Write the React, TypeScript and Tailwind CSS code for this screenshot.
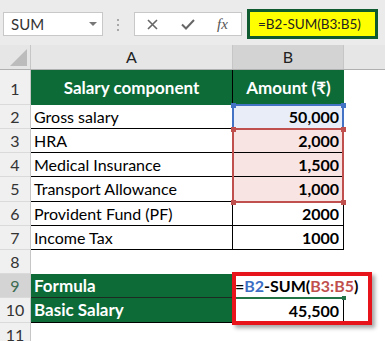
const GREEN = "bg-[#0c6b37]";

const RowNum = ({ n, h, sel, bottom }: { n: string; h: string; sel?: boolean; bottom?: boolean }) => (
  <div
    className={`w-[31px] shrink-0 border-r border-r-[#c6c6c6] border-b border-b-[#dadada] flex justify-center text-[16px] ${h} ${
      sel ? "bg-[#d4d4d4] text-[#3d6b50]" : "bg-[#f0f0f0] text-[#333]"
    } ${bottom ? "items-end pb-[3px]" : "items-center"}`}
  >
    {n}
  </div>
);

const App = () => {
  return (
    <div className="w-[385px] h-[341px] overflow-hidden bg-white font-['Lato',sans-serif] relative">
      {/* formula bar */}
      <div className="h-[45px] bg-[#ebebeb] flex items-start">
        <div className="ml-[3px] mt-[12px] w-[100px] h-[24px] bg-white border border-[#c8c8c8] flex items-center justify-between pl-[7px] pr-[5px] text-[15px] text-[#333]">
          <span>SUM</span>
          <svg width="8" height="5" viewBox="0 0 8 5">
            <polygon points="0,0 8,0 4,4" fill="#777" />
          </svg>
        </div>
        <div className="ml-[14px] mt-[19px] flex flex-col gap-[3px]">
          <div className="w-[2px] h-[2px] bg-[#a8a8a8]" />
          <div className="w-[2px] h-[2px] bg-[#a8a8a8]" />
          <div className="w-[2px] h-[2px] bg-[#a8a8a8]" />
        </div>
        <div className="ml-[15px] mt-[12px] w-[108px] h-[24px] bg-white border border-[#c8c8c8] flex items-center">
          <svg width="11" height="11" viewBox="0 0 11 11" className="ml-[12px]">
            <path d="M1 1 L10 10 M10 1 L1 10" stroke="#666" strokeWidth="1.6" />
          </svg>
          <svg width="14" height="11" viewBox="0 0 14 11" className="ml-[23px]">
            <path d="M1 5.5 L5 9.5 L13 1" stroke="#666" strokeWidth="2" fill="none" />
          </svg>
          <span className="ml-[22px] italic text-[15px] text-[#555] font-['Liberation_Serif',serif]">fx</span>
        </div>
        <div className="ml-[5px] mt-[9px] w-[131px] h-[30px] border-[3px] border-[#0f5b2f] bg-[#ffff00] flex items-center pl-[8px] text-[13.5px] text-[#222]">
          =B2-SUM(B3:B5)
        </div>
      </div>

      {/* column headers */}
      <div className="h-[25px] flex bg-[#e6e6e6] border-b border-[#b0b0b0]">
        <div className="w-[31px] shrink-0 border-r border-[#c6c6c6] relative">
          <svg width="18" height="18" viewBox="0 0 18 18" className="absolute left-[10px] top-[4px]">
            <polygon points="17,0 17,17 0,17" fill="#bcbcbc" />
          </svg>
        </div>
        <div className="w-[202px] shrink-0 border-r border-[#c6c6c6] flex items-center justify-center text-[16px] text-[#222]">
          A
        </div>
        <div className="w-[111px] shrink-0 border-r border-[#c6c6c6] bg-[#d3d3d3] flex items-center justify-center text-[16px] text-[#222]">
          B
        </div>
        <div className="flex-1" />
      </div>

      {/* grid */}
      <div className="relative text-[16px] text-black">
        {/* row 1 */}
        <div className="flex h-[35px]">
          <RowNum n="1" h="h-[35px]" bottom />
          <div className={`w-[202px] shrink-0 ${GREEN} border-r border-black flex items-end justify-center pb-[5px] text-white font-bold text-[17px]`}>
            Salary component
          </div>
          <div className={`w-[111px] shrink-0 ${GREEN} flex items-end justify-center pb-[5px] text-white font-bold text-[17px]`}>
            Amount (₹)
          </div>
        </div>

        {[
          ["2", "Gross salary", "50,000", "h-[24px]", "bg-[#e8edf7]"],
          ["3", "HRA", "2,000", "h-[24px]", "bg-[#f9e4e4]"],
          ["4", "Medical Insurance", "1,500", "h-[24px]", "bg-[#f9e4e4]"],
          ["5", "Transport Allowance", "1,000", "h-[25px]", "bg-[#f9e4e4]"],
          ["6", "Provident Fund (PF)", "2000", "h-[24px]", "bg-white"],
          ["7", "Income Tax", "1000", "h-[24px]", "bg-white"],
        ].map(([n, a, b, h, bg]) => (
          <div key={n} className={`flex ${h}`}>
            <RowNum n={n} h={h} />
            <div className="w-[202px] shrink-0 border-r border-b border-black flex items-center pl-[3px]">{a}</div>
            <div className={`w-[111px] shrink-0 border-r border-b border-black flex items-center justify-end pr-[4px] font-bold ${bg}`}>
              {b}
            </div>
          </div>
        ))}

        {/* row 8 */}
        <div className="flex h-[24px]">
          <RowNum n="8" h="h-[24px]" />
        </div>

        {/* row 9 */}
        <div className="flex h-[24px]">
          <RowNum n="9" h="h-[24px]" sel />
          <div className={`w-[202px] shrink-0 ${GREEN} border-b border-[#1d2a22] flex items-center pl-[3px] text-white font-bold text-[17px]`}>
            Formula
          </div>
          <div className="w-[111px] shrink-0 flex items-center pl-[2px] font-bold whitespace-nowrap overflow-visible z-10">
            <span>=</span>
            <span className="text-[#3c6fc4]">B2</span>
            <span>-SUM(</span>
            <span className="text-[#c0504d]">B3:B5</span>
            <span>)</span>
          </div>
        </div>

        {/* row 10 */}
        <div className="flex h-[25px]">
          <RowNum n="10" h="h-[25px]" />
          <div className={`w-[202px] shrink-0 ${GREEN} border-b border-black flex items-center pl-[3px] text-white font-bold text-[17px]`}>
            Basic Salary
          </div>
          <div className="w-[111px] shrink-0 border-r border-black flex items-center justify-end pr-[4px] font-bold">45,500</div>
        </div>

        {/* row 11 */}
        <div className="flex h-[24px]">
          <RowNum n="11" h="h-[24px]" />
        </div>

        {/* reference highlights */}
        <div className="absolute left-[232px] top-[34px] w-[112px] h-[26px] border-2 border-[#4472c4]" />
        <div className="absolute left-[232px] top-[58px] w-[112px] h-[75px] border-2 border-[#c0504d]" />
        <div className="absolute left-[231px] top-[33px] w-[5px] h-[5px] bg-[#4472c4]" />
        <div className="absolute left-[341px] top-[33px] w-[5px] h-[5px] bg-[#4472c4]" />
        <div className="absolute left-[231px] top-[57px] w-[5px] h-[5px] bg-[#c0504d]" />
        <div className="absolute left-[341px] top-[57px] w-[5px] h-[5px] bg-[#c0504d]" />
        <div className="absolute left-[231px] top-[130px] w-[5px] h-[5px] bg-[#c0504d]" />
        <div className="absolute left-[341px] top-[130px] w-[5px] h-[5px] bg-[#c0504d]" />

        {/* active cell edge */}
        <div className="absolute left-[236px] top-[227px] w-[108px] h-[2px] bg-[#217346]" />
        <div className="absolute left-[342px] top-[226px] w-[4px] h-[4px] bg-[#217346]" />

        {/* red callout */}
        <div className="absolute left-[232px] top-[202px] w-[140px] h-[53px] border-4 border-[#e8141c] shadow-[3px_3px_4px_rgba(0,0,0,0.35)]" />
      </div>
    </div>
  );
};

export default App;
